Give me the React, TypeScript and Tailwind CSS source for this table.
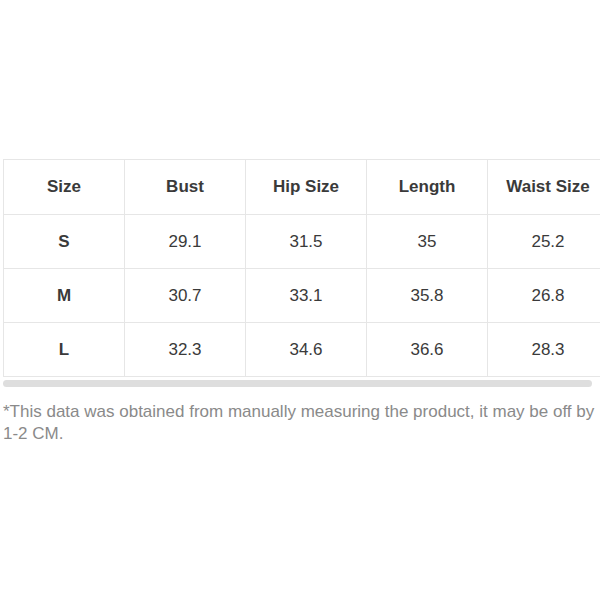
import React from 'react';

const headers = ['Size', 'Bust', 'Hip Size', 'Length', 'Waist Size'];

const rows = [
  ['S', '29.1', '31.5', '35', '25.2'],
  ['M', '30.7', '33.1', '35.8', '26.8'],
  ['L', '32.3', '34.6', '36.6', '28.3'],
];

export default function App() {
  return (
    <div
      className="w-[600px] h-[600px] bg-white pt-[159px] pl-[3px] text-[#3a3a3a]"
      style={{ fontFamily: '"Liberation Sans", Arial, sans-serif' }}
    >
      <div className="w-[597px] overflow-hidden">
        <table className="border-collapse table-fixed w-[606px]">
          <thead>
            <tr className="h-[55px]">
              {headers.map((h) => (
                <th
                  key={h}
                  className="w-[121px] border border-[#e6e6e6] text-[17px] font-bold text-center align-middle"
                >
                  {h}
                </th>
              ))}
            </tr>
          </thead>
          <tbody>
            {rows.map((r) => (
              <tr key={r[0]} className="h-[54px]">
                {r.map((c, i) => (
                  <td
                    key={i}
                    className={`border border-[#e6e6e6] text-[17px] text-center align-middle ${
                      i === 0 ? 'font-bold' : 'font-normal'
                    }`}
                  >
                    {c}
                  </td>
                ))}
              </tr>
            ))}
          </tbody>
        </table>
      </div>
      <div className="mt-[3px] h-[7px] w-[589px] rounded-full bg-[#dedede]" />
      <p className="mt-[14px] pr-[2px] text-[17px] leading-[22px] text-[#8a8a8a]">
        *This data was obtained from manually measuring the product, it may be off by 1-2 CM.
      </p>
    </div>
  );
}
